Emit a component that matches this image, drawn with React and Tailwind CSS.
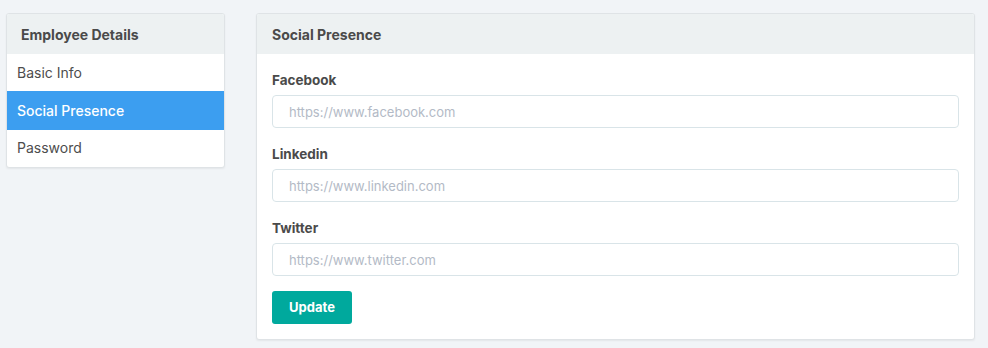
import React from 'react';

const fields = [
  { label: 'Facebook', placeholder: 'https://www.facebook.com' },
  { label: 'Linkedin', placeholder: 'https://www.linkedin.com' },
  { label: 'Twitter', placeholder: 'https://www.twitter.com' },
];

function App() {
  return (
    <div
      className="min-h-[348px] w-[988px] bg-[#f1f4f7] flex items-start pt-[13px] pl-[6px] gap-[31px] text-[#4d4d4d]"
      style={{ fontFamily: 'Inter, "Noto Sans", sans-serif' }}
    >
      {/* Sidebar */}
      <div className="w-[219px] bg-white border border-[#dfe3e6] rounded-[3px] overflow-hidden shadow-[0_1px_2px_rgba(0,0,0,0.06)]">
        <div className="h-[40px] bg-[#edf1f2] flex items-center px-[14px] text-[14px] font-bold text-[#4a4a4a]">
          Employee Details
        </div>
        <div className="h-[37px] flex items-center px-[10px] pb-[1px] text-[14px]">Basic Info</div>
        <div className="h-[39px] flex items-center px-[10px] pb-[1px] text-[14px] bg-[#3c9ef0] text-white font-medium">
          Social Presence
        </div>
        <div className="h-[37px] flex items-center px-[10px] pb-[3px] text-[14px]">Password</div>
      </div>

      {/* Main card */}
      <div className="w-[719px] bg-white border border-[#dfe3e6] rounded-[3px] overflow-hidden shadow-[0_1px_2px_rgba(0,0,0,0.06)]">
        <div className="h-[40px] bg-[#edf1f2] flex items-center px-[15px] text-[14px] font-bold text-[#4a4a4a]">
          Social Presence
        </div>
        <div className="px-[15px] pt-[16px] pb-[15px]">
          {fields.map((f) => (
            <div key={f.label} className="mb-[16px]">
              <div className="h-[20px] flex items-center text-[13.5px] font-bold text-[#4a4a4a] mb-[5px]">
                {f.label}
              </div>
              <input
                className="w-full h-[33px] border border-[#d9e4e8] rounded-[4px] px-[16px] text-[13px] outline-none placeholder:text-[#b3bac6]"
                placeholder={f.placeholder}
              />
            </div>
          ))}
          <button className="-mt-px h-[33px] w-[80px] bg-[#00a99d] text-white text-[13px] font-bold rounded-[3px]">
            Update
          </button>
        </div>
      </div>
    </div>
  );
}

export default App;
